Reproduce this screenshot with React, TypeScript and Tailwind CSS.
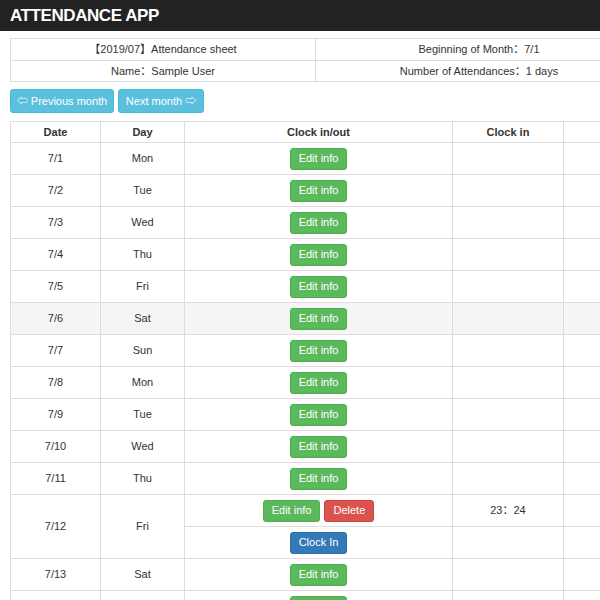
import React from 'react';

type Row = { date: string; day: string; hover?: boolean };

const rows: Row[] = [
  { date: '7/1', day: 'Mon' },
  { date: '7/2', day: 'Tue' },
  { date: '7/3', day: 'Wed' },
  { date: '7/4', day: 'Thu' },
  { date: '7/5', day: 'Fri' },
  { date: '7/6', day: 'Sat', hover: true },
  { date: '7/7', day: 'Sun' },
  { date: '7/8', day: 'Mon' },
  { date: '7/9', day: 'Tue' },
  { date: '7/10', day: 'Wed' },
  { date: '7/11', day: 'Thu' },
];

const font = { fontFamily: '"Liberation Sans", "Noto Sans CJK SC", sans-serif' };

function Btn({ color, children }: { color: 'green' | 'red' | 'blue'; children: React.ReactNode }) {
  const cls =
    color === 'green'
      ? 'bg-[#5cb85c] border-[#4cae4c]'
      : color === 'red'
      ? 'bg-[#d9534f] border-[#d43f3a]'
      : 'bg-[#337ab7] border-[#2e6da4]';
  return (
    <span className={`inline-flex h-[22px] items-center rounded-[3px] border px-[8px] text-[11px] text-white ${cls}`}>
      {children}
    </span>
  );
}

const td = 'h-[32px] border border-[#ddd] p-0 text-center align-middle';

export default function App() {
  return (
    <div className="h-[600px] w-[600px] overflow-hidden bg-white text-[11px] text-[#333]" style={font}>
      <header className="flex h-[31px] items-center bg-[#222] px-[10px]">
        <span className="text-[17px] font-bold tracking-tight text-white">ATTENDANCE APP</span>
      </header>

      <div className="px-[10px] pt-[7px]">
        <table className="w-[633px] table-fixed border-collapse">
          <tbody>
            <tr>
              <td className="h-[22px] w-[305px] border border-[#ddd] text-center">【2019/07】Attendance sheet</td>
              <td className="h-[22px] border border-[#ddd] text-center">Beginning of Month：7/1</td>
            </tr>
            <tr>
              <td className="h-[21px] border border-[#ddd] text-center">Name：Sample User</td>
              <td className="h-[21px] border border-[#ddd] text-center">Number of Attendances：1 days</td>
            </tr>
          </tbody>
        </table>

        <div className="mt-[7px] flex gap-[4px]">
          <span className="inline-flex h-[24px] w-[104px] items-center justify-center rounded-[3px] border border-[#46b8da] bg-[#5bc0de] text-[11px] text-white">
            ⇦ Previous month
          </span>
          <span className="inline-flex h-[24px] w-[86px] items-center justify-center rounded-[3px] border border-[#46b8da] bg-[#5bc0de] text-[11px] text-white">
            Next month ⇨
          </span>
        </div>

        <table className="mt-[8px] w-[900px] table-fixed border-collapse">
          <colgroup>
            <col className="w-[90px]" />
            <col className="w-[84px]" />
            <col className="w-[268px]" />
            <col className="w-[111px]" />
            <col />
          </colgroup>
          <thead>
            <tr>
              <th className="h-[21px] border border-[#ddd] text-center font-bold">Date</th>
              <th className="h-[21px] border border-[#ddd] text-center font-bold">Day</th>
              <th className="h-[21px] border border-[#ddd] text-center font-bold">Clock in/out</th>
              <th className="h-[21px] border border-[#ddd] text-center font-bold">Clock in</th>
              <th className="h-[21px] border border-[#ddd] text-center font-bold">Clock out</th>
            </tr>
          </thead>
          <tbody>
            {rows.map((r) => (
              <tr key={r.date} className={r.hover ? 'bg-[#f5f5f5]' : ''}>
                <td className={td}>{r.date}</td>
                <td className={td}>{r.day}</td>
                <td className={td}>
                  <Btn color="green">Edit info</Btn>
                </td>
                <td className={td}></td>
                <td className={td}></td>
              </tr>
            ))}
            <tr>
              <td className={td} rowSpan={2}>7/12</td>
              <td className={td} rowSpan={2}>Fri</td>
              <td className={td}>
                <div className="flex justify-center gap-[4px]">
                  <Btn color="green">Edit info</Btn>
                  <Btn color="red">Delete</Btn>
                </div>
              </td>
              <td className={td}>23：24</td>
              <td className={td}></td>
            </tr>
            <tr>
              <td className={td}>
                <Btn color="blue">Clock In</Btn>
              </td>
              <td className={td}></td>
              <td className={td}></td>
            </tr>
            <tr>
              <td className={td}>7/13</td>
              <td className={td}>Sat</td>
              <td className={td}>
                <Btn color="green">Edit info</Btn>
              </td>
              <td className={td}></td>
              <td className={td}></td>
            </tr>
            <tr>
              <td className={td}>7/14</td>
              <td className={td}>Sun</td>
              <td className={td}>
                <Btn color="green">Edit info</Btn>
              </td>
              <td className={td}></td>
              <td className={td}></td>
            </tr>
          </tbody>
        </table>
      </div>
    </div>
  );
}
